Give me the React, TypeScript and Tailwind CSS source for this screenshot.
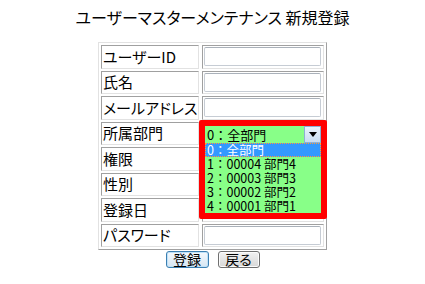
import React from "react";

const labels = ["ユーザーID", "氏名", "メールアドレス", "所属部門", "権限", "性別", "登録日", "パスワード"];

const options = ["0：全部門", "1：00004 部門4", "2：00003 部門3", "3：00002 部門2", "4：00001 部門1"];

function TextBox() {
  return (
    <div className="h-[19px] w-[117px] rounded-[2px] border border-[#c6ccd4] border-t-[#aab1ba] bg-white" />
  );
}

function DeptDropdown() {
  return (
    <div className="absolute -left-[4px] -top-[2.5px] z-10 h-[99px] w-[128px] rounded-[2px] border-[6px] border-[#ff0000] bg-[#88ff88] [font-feature-settings:normal]">
      <div className="flex h-[17px] items-center">
        <span className="flex-1 pl-[2px] text-[13px] leading-[15px] text-black">{options[0]}</span>
        <div className="flex h-[17px] w-[17px] items-center justify-center border border-[#8eb1d3] bg-gradient-to-b from-[#eaf3fc] to-[#c9ddf2]">
          <svg width="8" height="5" viewBox="0 0 8 5">
            <path d="M0 0h8L4 5z" fill="#000" />
          </svg>
        </div>
      </div>
      <ul>
        {options.map((opt, i) => (
          <li
            key={opt}
            className={
              i === 0
                ? "flex h-[14px] items-center border border-dotted border-[#ff9a3c] bg-[#3399ff] pl-[1px] text-[12.5px] leading-[12px] whitespace-nowrap text-white"
                : "flex h-[14px] items-center pl-[2px] text-[12.5px] leading-[14px] whitespace-nowrap text-black"
            }
          >
            {opt}
          </li>
        ))}
      </ul>
    </div>
  );
}

export default function App() {
  return (
    <div className="h-[284px] w-[425px] bg-white font-['Noto_Sans_CJK_JP',sans-serif] text-black [font-feature-settings:'palt']">
      <h1 className="pt-[8px] text-center text-[16px] leading-[19px] font-normal">
        ユーザーマスターメンテナンス 新規登録
      </h1>

      <div className="mx-auto mt-[15px] grid w-[229px] grid-cols-[98px_122px] gap-x-[3px] gap-y-[2px] border border-[#e2e2e2] border-r-[#a0a0a0] border-b-[#a0a0a0] p-[2px]">
        {labels.map((label, i) => (
          <React.Fragment key={label}>
            <div className="flex h-[23.5px] items-center border border-[#a0a0a0] border-r-[#e2e2e2] border-b-[#e2e2e2] pl-[1px] text-[15px] leading-[18px] whitespace-nowrap">
              {label}
            </div>
            <div className="relative flex h-[23.5px] items-center border border-[#a0a0a0] border-r-[#e2e2e2] border-b-[#e2e2e2] pl-[1px]">
              {i === 3 ? <DeptDropdown /> : <TextBox />}
            </div>
          </React.Fragment>
        ))}
      </div>

      <div className="mt-[1px] flex justify-center gap-[9px]">
        <button className="h-[17px] w-[43px] rounded-[3px] border border-[#3c7fb1] bg-gradient-to-b from-[#f4f9fd] to-[#d6e6f3] text-[14px] leading-[15px] shadow-[inset_0_0_0_1px_#bfe1f8]">
          登録
        </button>
        <button className="h-[17px] w-[42px] rounded-[3px] border border-[#707070] bg-gradient-to-b from-[#f2f2f2] to-[#d8d8d8] text-[14px] leading-[15px] shadow-[inset_0_0_0_1px_#fcfcfc]">
          戻る
        </button>
      </div>
    </div>
  );
}
